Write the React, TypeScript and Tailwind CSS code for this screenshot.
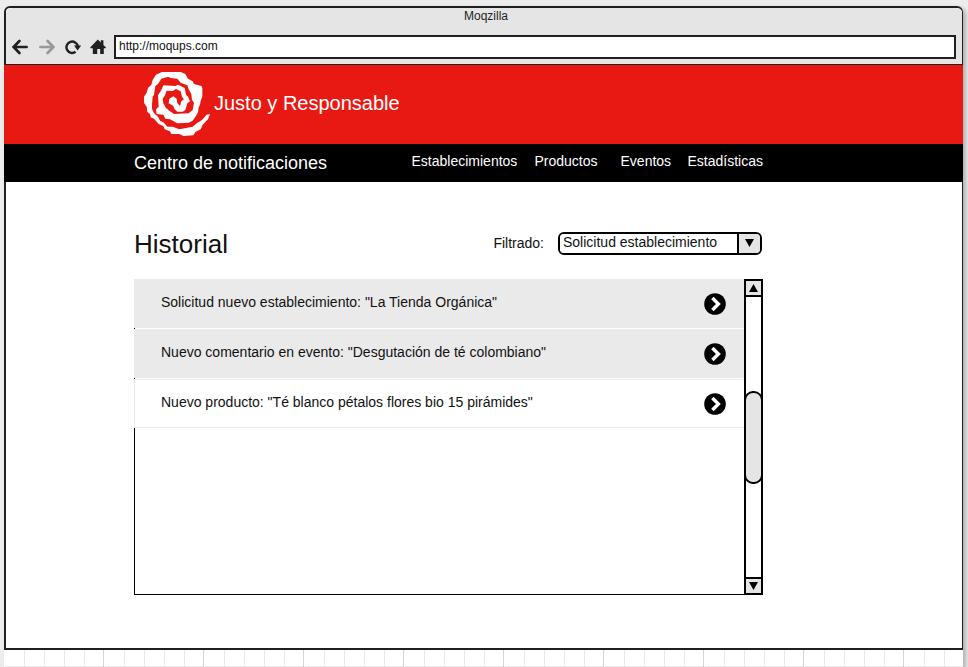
import React from "react";

const links = [
  { label: "Establecimientos", style: "min-w-[107px]" },
  { label: "Productos", style: "min-w-[70px]" },
  { label: "Eventos", style: "min-w-[51px]" },
  { label: "Estadísticas", style: "" },
];

const notifications = [
  { text: 'Solicitud nuevo establecimiento: "La Tienda Orgánica"', unread: true },
  { text: 'Nuevo comentario en evento: "Desgutación de té colombiano"', unread: true },
  { text: 'Nuevo producto: "Té blanco pétalos flores bio 15 pirámides"', unread: false },
];

function BackIcon() {
  return (
    <svg width="16" height="16" viewBox="0 0 16 16" fill="none" stroke="currentColor" strokeWidth="2.7" strokeLinecap="round">
      <path d="M14.6 8H2.6M7.4 2 1.6 8l5.8 6" />
    </svg>
  );
}

function ForwardIcon() {
  return (
    <svg width="16" height="16" viewBox="0 0 16 16" fill="none" stroke="currentColor" strokeWidth="2.7" strokeLinecap="round">
      <path d="M1.4 8h12M8.6 2l5.8 6-5.8 6" />
    </svg>
  );
}

function ReloadIcon() {
  return (
    <svg width="16" height="16" viewBox="0 0 16 16" fill="none">
      <path d="M10.6 12.8A5.7 5.7 0 1 1 12.8 7.4" stroke="currentColor" strokeWidth="2.4" />
      <path d="M9 6.4h7.2l-3.6 5z" fill="currentColor" />
    </svg>
  );
}

function HomeIcon() {
  return (
    <svg width="16" height="16" viewBox="0 0 16 16" fill="currentColor">
      <path d="M7.8.4 10.8 3.4V1.2h2.6V6l2.4 2.3v.9H13.8V15H10.2V10H7.2v5H2.8V9.2H.4v-.9z" />
    </svg>
  );
}

function Logo() {
  return (
    <svg width="74" height="74" viewBox="0 0 222 222" fill="#fff" aria-hidden="true">
      <path
        d="M210 144 L204 160 L188 176 L182 190 L166 198 L160 208 L130 210 L118 204 L94 204 L90 196 L74 190 L70 180 L56 174
        L42 158 L32 154 L30 144 L22 138 L20 122 L12 110 L12 92 L20 80 L24 66 L34 56 L38 42 L48 26 L66 18 L122 18
        L136 24 L144 38 L158 46 L162 54 L184 60 L187 66 L187 92 L182 104 L180 116 L176 124 L174 138 L168 150 L158 164
        L146 170 L112 172 L90 160 L76 158 L70 146 L50 144 L48 130 L56 122 L54 88 L64 72 L70 58 L106 60 L114 56 L134 66
        L138 86 L144 92 L150 106 L142 112 L136 132 L128 137 L112 137 L104 130 L100 120 L86 112 L88 98 L100 91 L110 98
        L112 112 L120 120 L124 106 L132 100 L126 92 L122 76 L108 69 L98 75 L80 74 L74 90 L68 98 L70 112 L78 126
        L88 134 L102 144 L146 142 L158 132 L162 110 L156 102 L154 84 L146 70 L142 58 L122 50 L112 38 L92 36 L84 32
        L64 38 L54 54 L46 60 L42 86 L38 92 L36 114 L36 128 L42 142 L54 152 L60 164 L72 170 L82 182 L98 182 L118 190
        L158 182 L170 172 L186 162 L200 146 Z"
      />
    </svg>
  );
}

function OpenIcon() {
  return (
    <svg width="22" height="22" viewBox="0 0 22 22" fill="none">
      <circle cx="11" cy="11" r="10.8" fill="#000" />
      <path d="M8.4 5 14.4 11 8.4 17" stroke="#fff" strokeWidth="3.4" />
    </svg>
  );
}

function Triangle({ up = false }: { up?: boolean }) {
  return (
    <svg width="9" height="8" viewBox="0 0 9 8" fill="#000" aria-hidden="true">
      <path d={up ? "M4.5 0 9 8H0z" : "M0 0h9L4.5 8z"} />
    </svg>
  );
}

function BrowserBar() {
  return (
    <header className="rounded-t-md border-b border-[#231f20] bg-[#e5e5e5] text-[#231f20]">
      <div className="h-5 pl-1 text-center text-xs leading-4">Moqzilla</div>
      <div className="flex items-center pt-[7px] pr-1.5 pb-[5px] pl-1.5">
        <div className="mr-2 flex gap-2.5">
          <button type="button" aria-label="Atrás" className="mr-px"><BackIcon /></button>
          <button type="button" aria-label="Adelante" className="text-[#999]"><ForwardIcon /></button>
          <button type="button" aria-label="Recargar"><ReloadIcon /></button>
          <button type="button" aria-label="Inicio" className="-ml-px"><HomeIcon /></button>
        </div>
        <input
          type="text"
          aria-label="Dirección"
          defaultValue="http://moqups.com"
          className="h-6 min-w-0 flex-1 border-2 border-[#231f20] bg-white px-[3px] pb-0.5 text-xs text-[#111] outline-none"
        />
      </div>
    </header>
  );
}

function Scrollbar() {
  return (
    <div className="flex w-[19px] flex-col border-2 border-black bg-white">
      <button type="button" aria-label="Subir" className="flex h-4 items-center justify-center border-b-2 border-black bg-[#e5e5e5]">
        <Triangle up />
      </button>
      <div className="flex-1 pt-[94px]">
        <div className="-mx-0.5 h-[93px] rounded-[9px] border-2 border-black bg-[#e5e5e5]" />
      </div>
      <button type="button" aria-label="Bajar" className="flex h-4 items-center justify-center border-t-2 border-black bg-[#e5e5e5]">
        <Triangle />
      </button>
    </div>
  );
}

export default function App() {
  return (
    <div className="min-h-screen bg-[#ededed] pt-1.5 pr-[5px] pl-1 font-['Liberation_Sans',Arial,sans-serif] text-[#111]">
      <div className="flex min-h-[calc(100vh-6px)] flex-col rounded-t-md shadow-[3px_2px_4px_rgba(0,0,0,0.25)]">
        <div className="rounded-t-md border-2 border-r border-[#231f20] bg-white">
          <BrowserBar />

          <div className="-mr-px -ml-0.5 bg-[#e71912] pl-[136px] text-white">
            <div className="flex h-[79px] items-center pb-[3px]">
              <Logo />
              <h1 className="text-xl leading-6">Justo y Responsable</h1>
            </div>
          </div>

          <div className="-mr-px -ml-0.5 bg-black pl-[130px] text-white">
            <div className="flex h-[38px] max-w-[629px] items-center justify-between">
              <h2 className="text-lg leading-6">Centro de notificaciones</h2>
              <nav className="flex gap-4 pb-1 text-sm leading-5">
                {links.map((l) => (
                  <a key={l.label} href="#" className={l.style}>{l.label}</a>
                ))}
              </nav>
            </div>
          </div>

          <main className="pt-[46px] pb-[53px] pl-32">
            <div className="max-w-[629px]">
              <div className="flex items-center justify-between">
                <h3 className="text-[26px] leading-8">Historial</h3>
                <div className="flex items-center pr-px pb-0.5">
                  <label htmlFor="filtro" className="mr-3.5 text-sm">Filtrado:</label>
                  <div className="flex h-[23px] w-[204px] overflow-hidden rounded-md border-2 border-black bg-white">
                    <select
                      id="filtro"
                      className="min-w-0 flex-1 appearance-none bg-white pb-0.5 pl-[3px] text-sm leading-4 outline-none"
                    >
                      <option>Solicitud establecimiento</option>
                    </select>
                    <span className="flex w-[23px] items-center justify-center border-l-2 border-black bg-[#e5e5e5]">
                      <Triangle />
                    </span>
                  </div>
                </div>
              </div>

              <div className="mt-[19px] flex h-[316px]">
                <div className="flex-1 border-b border-l border-black">
                  <ul className="-ml-px flex flex-col gap-px">
                    {notifications.map((n) => (
                      <li
                        key={n.text}
                        className={
                          n.unread
                            ? "flex h-[49px] items-center justify-between border border-[#eaeaea] bg-[#eaeaea] pr-[17px] pl-[26px]"
                            : "flex h-[49px] items-center justify-between border border-[#eaeaea] border-r-white bg-white pr-[17px] pl-[26px]"
                        }
                      >
                        <span className="pb-1 text-sm leading-5">{n.text}</span>
                        <button type="button" aria-label="Abrir notificación"><OpenIcon /></button>
                      </li>
                    ))}
                  </ul>
                </div>
                <Scrollbar />
              </div>
            </div>
          </main>
        </div>

        <div className="min-h-4 flex-1 bg-white bg-[linear-gradient(to_right,#fff_1px,transparent_1px,transparent_99px,#d6d6d6_99px),linear-gradient(to_right,#e9e9e9_1px,transparent_1px),linear-gradient(to_bottom,transparent_16px,#e9e9e9_16px)] bg-[size:100px_100%,20px_100%,100%_20px]" />
      </div>
    </div>
  );
}
